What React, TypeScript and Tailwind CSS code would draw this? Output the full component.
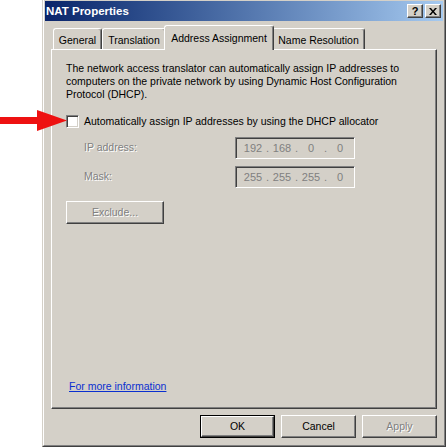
import React from "react";

const raised =
  "border border-t-white border-l-white border-r-[#404040] border-b-[#404040] shadow-[inset_-1px_-1px_0_#808080]";
const sunken =
  "border border-t-[#808080] border-l-[#808080] border-r-white border-b-white shadow-[inset_1px_1px_0_#404040,inset_-1px_-1px_0_#d4d0c8]";
const etched = "text-[#808080] [text-shadow:1px_1px_0_#ffffff]";

function IpBox({ parts }: { parts: string[] }) {
  return (
    <div className={`w-[120px] h-[22px] bg-[#d4d0c8] ${sunken} flex items-center pl-[4px] text-[#808080] text-[11px] overflow-hidden`}>
      {parts.map((p, i) => (
        <React.Fragment key={i}>
          <span className="w-[26px] text-center shrink-0">{p}</span>
          {i < 3 && <span className="w-[3px] text-center shrink-0">.</span>}
        </React.Fragment>
      ))}
    </div>
  );
}

function Tab({ label, w, selected }: { label: string; w: string; selected?: boolean }) {
  if (selected) {
    return (
      <div
        className={`${w} h-[25px] -mx-[2px] mb-[-1px] relative z-10 bg-[#d4d0c8] border-l border-t border-r border-t-white border-l-white border-r-[#404040] shadow-[inset_-1px_0_0_#808080] rounded-t-[3px] pt-[6px] text-center leading-[13px]`}
      >
        {label}
      </div>
    );
  }
  return (
    <div
      className={`${w} h-[21px] bg-[#d4d0c8] border-l border-t border-r border-t-white border-l-white border-r-[#404040] shadow-[inset_-1px_0_0_#808080] rounded-t-[3px] pt-[5px] text-center leading-[13px]`}
    >
      {label}
    </div>
  );
}

export default function App() {
  return (
    <div className="relative w-[446px] h-[448px] bg-white overflow-hidden font-['Liberation_Sans',Arial,sans-serif] text-[10.5px] text-black">
      <div className="flex">
        <div className="w-[42px] shrink-0" />
        <div className="mt-[-2px] w-[404px] h-[449px] shrink-0 border border-t-[#d4d0c8] border-l-[#d4d0c8] border-r-[#404040] border-b-[#404040] bg-[#d4d0c8]">
          <div className="h-full border border-t-white border-l-white border-r-[#808080] border-b-[#808080] p-[1px] flex flex-col">
            {/* Title bar */}
            <div className="h-[20px] shrink-0 bg-gradient-to-r from-[#0a246a] to-[#a6caf0] flex items-center pl-[1px] pr-[2px]">
              <span className="text-white font-bold text-[11.5px] leading-[14px] mt-[-1px]">NAT Properties</span>
              <div className="ml-auto flex gap-[2px]">
                <div className={`w-[16px] h-[14px] bg-[#d4d0c8] ${raised} flex items-center justify-center font-bold text-[11px] leading-[10px]`}>
                  ?
                </div>
                <div className={`w-[16px] h-[14px] bg-[#d4d0c8] ${raised} flex items-center justify-center`}>
                  <svg width="8" height="7" viewBox="0 0 8 7">
                    <path d="M0 0h2l2 2.5L6 0h2L5 3.5 8 7H6L4 4.5 2 7H0l3-3.5z" fill="#000" />
                  </svg>
                </div>
              </div>
            </div>

            {/* Tabs */}
            <div className="mt-[4px] h-[24px] shrink-0 flex items-end pl-[8px]">
              <Tab label="General" w="w-[49px]" />
              <Tab label="Translation" w="w-[64px]" />
              <Tab label="Address Assignment" w="w-[110px]" selected />
              <Tab label="Name Resolution" w="w-[93px]" />
            </div>

            {/* Panel */}
            <div className="mx-[6px] h-[360px] shrink-0 border border-t-white border-l-white border-r-[#404040] border-b-[#404040] shadow-[inset_-1px_-1px_0_#808080] flex flex-col pl-[14px] pt-[12px] pb-[15px]">
              <p className="leading-[13px]">
                The network access translator can automatically assign IP addresses to
                <br />
                computers on the private network by using Dynamic Host Configuration
                <br />
                Protocol (DHCP).
              </p>

              <div className="mt-[14px] flex items-center h-[13px]">
                <div className={`w-[13px] h-[13px] bg-white ${sunken}`} />
                <span className="ml-[5px] leading-[13px]">
                  Automatically assign IP addresses by using the DHCP allocator
                </span>
              </div>

              <div className="mt-[9px] flex items-center h-[22px]">
                <span className={`ml-[18px] w-[151px] ${etched}`}>IP address:</span>
                <IpBox parts={["192", "168", "0", "0"]} />
              </div>
              <div className="mt-[7px] flex items-center h-[22px]">
                <span className={`ml-[18px] w-[151px] ${etched}`}>Mask:</span>
                <IpBox parts={["255", "255", "255", "0"]} />
              </div>

              <div className={`mt-[13px] w-[98px] h-[23px] ${raised} flex items-center justify-center ${etched}`}>
                Exclude...
              </div>

              <div className="mt-auto ml-[3px] leading-[13px] text-[#0a2fd0] underline">For more information</div>
            </div>

            {/* Footer buttons */}
            <div className="mt-[6px] mr-[6px] flex justify-end gap-[6px]">
              <div className="w-[75px] h-[23px] border border-black">
                <div className={`h-full ${raised} flex items-center justify-center`}>OK</div>
              </div>
              <div className={`w-[75px] h-[23px] ${raised} flex items-center justify-center`}>Cancel</div>
              <div className={`w-[75px] h-[23px] ${raised} flex items-center justify-center ${etched}`}>Apply</div>
            </div>
          </div>
        </div>
      </div>

      {/* Red arrow annotation */}
      <svg className="absolute left-0 top-[109px]" width="70" height="23" viewBox="0 0 70 23">
        <path d="M0 8h37V1l30 10.5L37 22v-7H0z" fill="#ee1111" />
      </svg>
    </div>
  );
}
